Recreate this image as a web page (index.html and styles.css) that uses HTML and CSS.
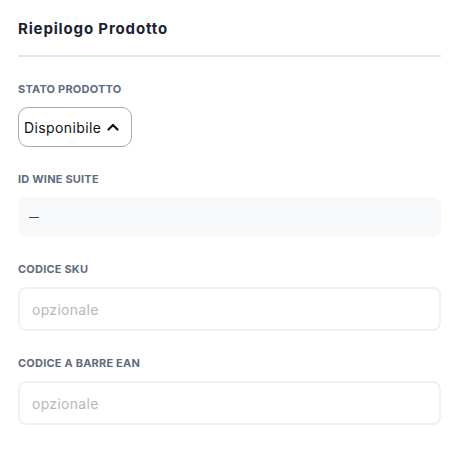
FILE: index.html
```
<!DOCTYPE html>
<html lang="it">
<head>
<meta charset="utf-8">
<title>Riepilogo Prodotto</title>
<link rel="stylesheet" href="styles.css">
</head>
<body>
<div class="panel">
  <div class="header">
    <h2 class="title">Riepilogo Prodotto</h2>
  </div>
  <div class="fields">
    <div class="field">
      <div class="label">STATO PRODOTTO</div>
      <div class="control-row">
        <button class="dropdown" type="button">
          <span>Disponibile</span>
          <svg class="chev" width="12" height="8" viewBox="0 0 12 8"><path d="M1.5 6.5 L6 2 L10.5 6.5" fill="none" stroke="#111" stroke-width="2.2" stroke-linecap="round" stroke-linejoin="round"/></svg>
        </button>
      </div>
    </div>
    <div class="field">
      <div class="label">ID WINE SUITE</div>
      <div class="readonly"><span class="dash">—</span></div>
    </div>
    <div class="field">
      <div class="label">CODICE SKU</div>
      <input class="input" type="text" placeholder="opzionale">
    </div>
    <div class="field">
      <div class="label">CODICE A BARRE EAN</div>
      <input class="input" type="text" placeholder="opzionale">
    </div>
  </div>
</div>
</body>
</html>
```
FILE: styles.css
```
* { box-sizing: border-box; }
html, body { margin: 0; padding: 0; background: #ffffff; }
body { font-family: Inter, "Open Sans", sans-serif; color: #111; }
.panel { padding: 18px 16px 0 18px; }
.header { border-bottom: 2px solid #e3e7ef; padding-bottom: 15px; }
.title { margin: 0; font-size: 15px; line-height: 22px; font-weight: 700; color: #1a2233; letter-spacing: 0.85px; }
.fields { display: flex; flex-direction: column; gap: 24px; padding-top: 24px; }
.field { display: flex; flex-direction: column; gap: 10px; }
.label { font-size: 11px; line-height: 16px; font-weight: 700; color: #5f6b80; letter-spacing: 0.2px; }
.control-row { display: flex; }
.dropdown { display: flex; align-items: center; gap: 6px; height: 40px; padding: 0 12px 0 5px; border: 1px solid #a9a9a9; border-radius: 10px; background: #fff; font-family: inherit; font-size: 14px; color: #111; letter-spacing: 0.4px; }
.chev { display: block; }
.readonly { height: 40px; display: flex; align-items: center; padding-left: 11px; background: #f8f9fb; border-radius: 8px; font-size: 14px; color: #111; }
.dash { font-size: 10px; line-height: 1; }
.input { height: 44px; width: 100%; border: 2px solid #eef1f6; border-radius: 8px; padding: 0 12px; font-family: inherit; font-size: 14px; color: #111; background: #fff; outline: none; letter-spacing: 0.3px; }
.input::placeholder { color: #b8b8b8; }
```
